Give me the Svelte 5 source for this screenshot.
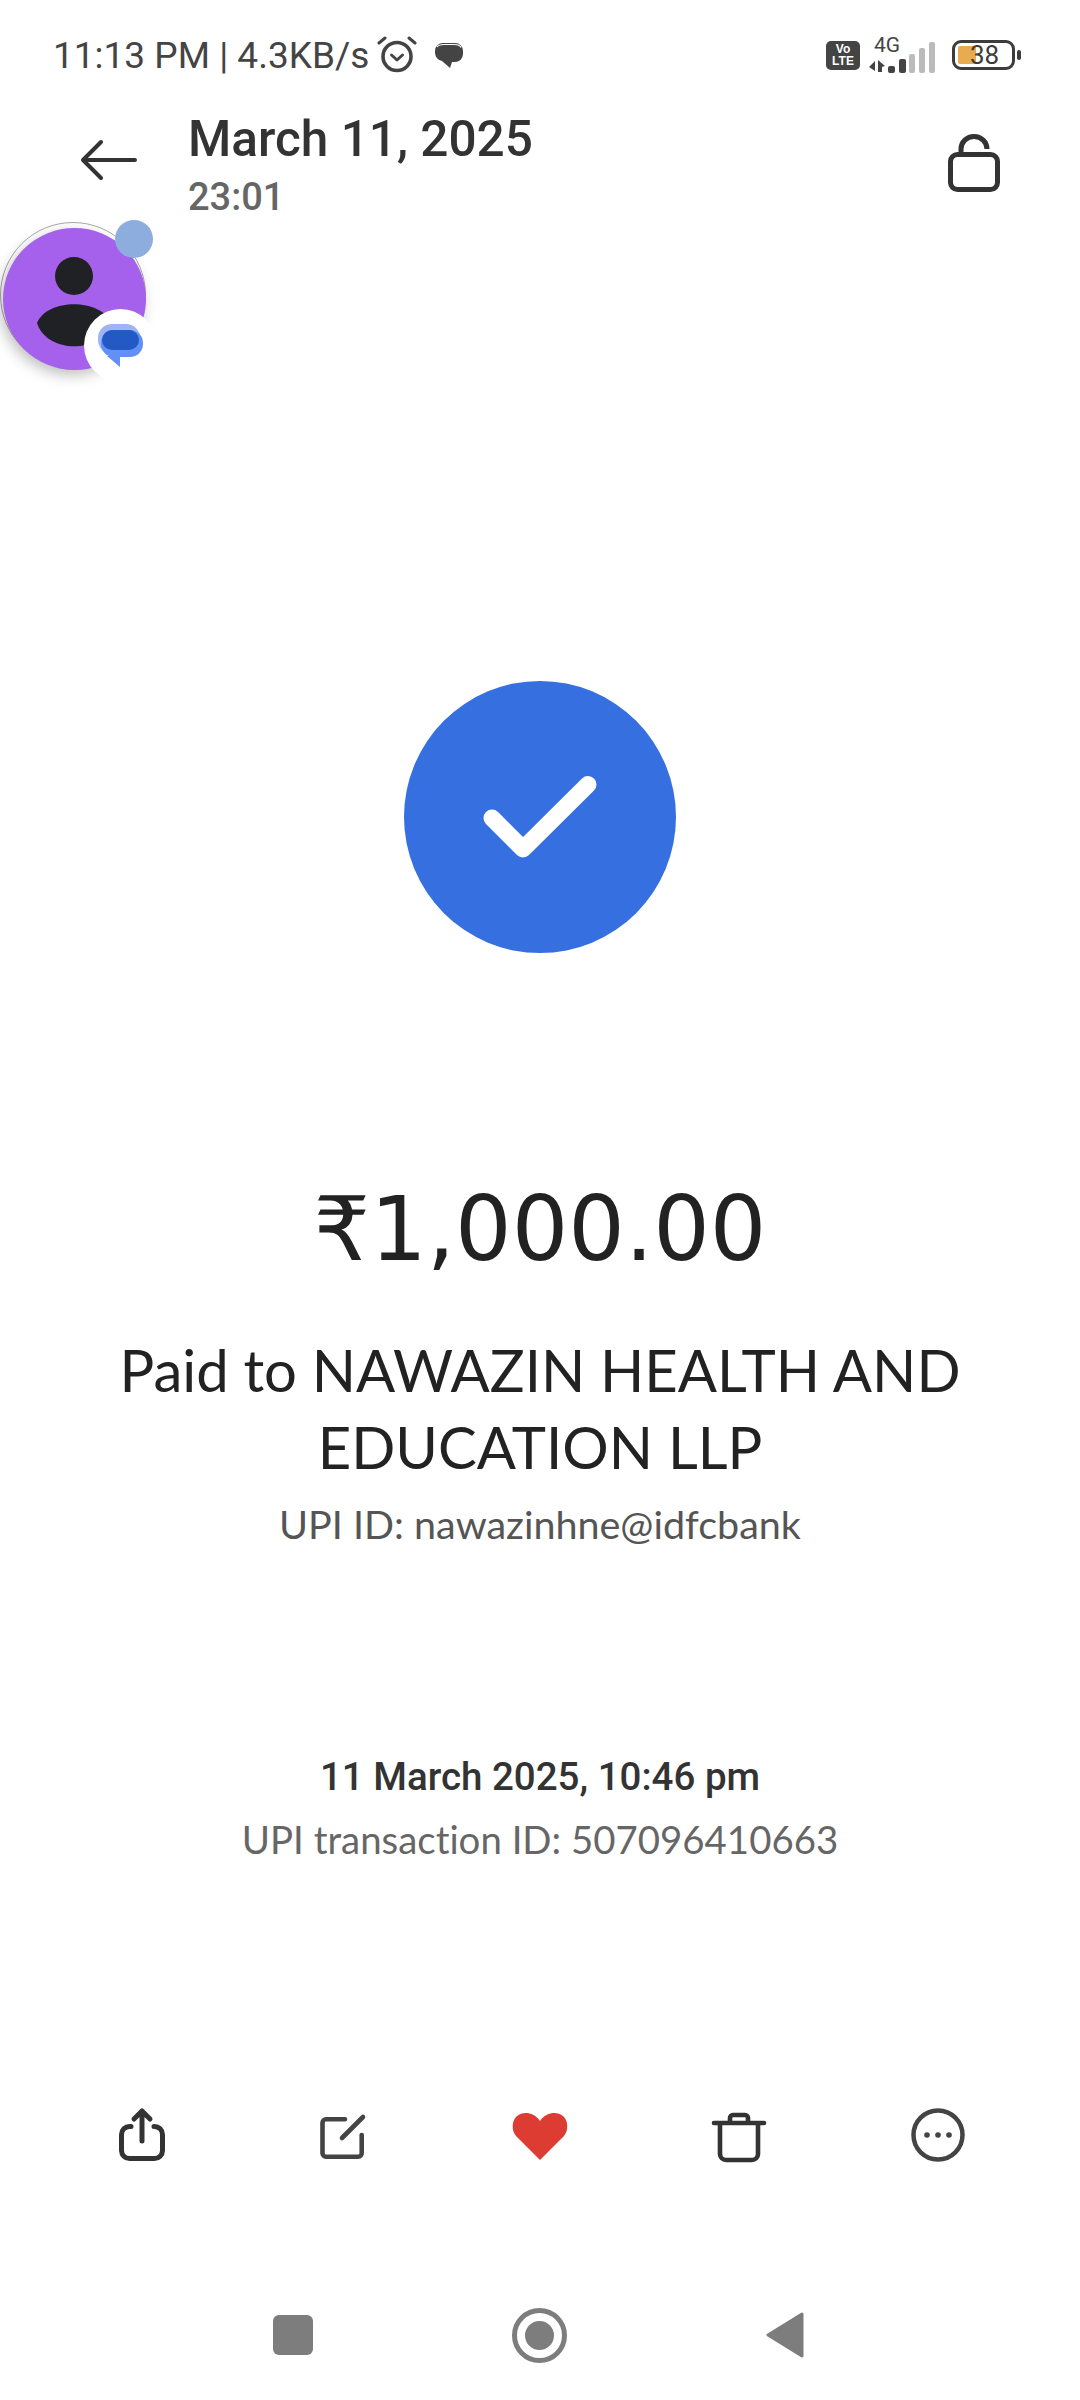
<script>
  const tools = ['share', 'edit', 'heart', 'trash', 'more'];
</script>

<div class="screen">
  <div class="status">
    <div class="status-left">
      <span class="status-text">11:13 PM | 4.3KB/s</span>
      <svg class="alarm" viewBox="0 0 40 40" width="40" height="40">
        <circle cx="20" cy="21.500" r="14" fill="none" stroke="#444" stroke-width="3.600" />
        <path d="M14.500 20l5.500 5 5.500-5" fill="none" stroke="#444" stroke-width="3" stroke-linecap="round" stroke-linejoin="round" />
        <path d="M2 8l6-5M38 8l-6-5" fill="none" stroke="#444" stroke-width="3" stroke-linecap="round" />
      </svg>
      <svg class="chat" viewBox="0 0 30 28" width="30" height="28">
        <path d="M9 2h12a8 8 0 0 1 8 8v3a8 8 0 0 1-8 8h-3l-2 6-8-7a9 9 0 0 1-7-8v-2a8 8 0 0 1 8-8z" fill="#444" />
        <path d="M3 6C5 3.500 8 3.500 10 3.500h10c3 0 6 .5 7 3" fill="none" stroke="#fff" stroke-width="1.200" />
      </svg>
    </div>
    <div class="status-right">
      <div class="volte"><span>Vo</span><span>LTE</span></div>
      <div class="net">
        <span class="net-label">4G</span>
        <svg viewBox="0 0 68 34" width="68" height="34">
          <path d="M6 22L0 28l6 4zM9 21l7 6-3 1v5H9z" fill="#444" />
          <rect x="19" y="27" width="7" height="7" rx="2" fill="#444" />
          <rect x="30" y="20" width="7" height="14" rx="2" fill="#444" />
          <rect x="40" y="15" width="6" height="19" rx="2" fill="#bbb" />
          <rect x="50" y="9" width="6" height="25" rx="2" fill="#bbb" />
          <rect x="60" y="3" width="6" height="31" rx="2" fill="#bbb" />
        </svg>
      </div>
      <div class="battery">
        <div class="battery-body">
          <div class="battery-fill"></div>
          <span class="battery-num">38</span>
        </div>
        <div class="battery-nub"></div>
      </div>
    </div>
  </div>

  <div class="header">
    <svg class="back" viewBox="0 0 60 44" width="60" height="44">
      <path d="M3 22h52M21 4L3 22l18 18" fill="none" stroke="#333" stroke-width="4" stroke-linecap="round" stroke-linejoin="round" />
    </svg>
    <div class="title">
      <div class="title-date">March 11, 2025</div>
      <div class="title-time">23:01</div>
    </div>
    <svg class="lock" viewBox="0 0 52 58" width="52" height="58">
      <rect x="2.500" y="20.500" width="47" height="35" rx="7" fill="none" stroke="#333" stroke-width="5" />
      <path d="M13 20v-5a13 12.500 0 0 1 26 0" fill="none" stroke="#333" stroke-width="5" />
    </svg>
  </div>

  <div class="bubble">
    <div class="ring"></div>
    <div class="avatar">
      <svg viewBox="0 0 143 142" width="143" height="142">
        <circle cx="71" cy="48" r="19" fill="#202124" />
        <path d="M34 95C44 70 98 70 108 95C98 126 44 126 34 95z" fill="#202124" />
      </svg>
    </div>
    <div class="dot"></div>
    <div class="badge">
      <svg viewBox="0 0 45 43" width="45" height="43">
        <rect x="0" y="0" width="42" height="30" rx="14" fill="#9db5f7" />
        <rect x="3" y="6" width="42" height="27" rx="13" fill="#6290f5" />
        <path d="M9 32l13 11V32z" fill="#6290f5" />
        <rect x="4" y="6" width="37" height="20" rx="10" fill="#2359c4" />
      </svg>
    </div>
  </div>

  <main class="content">
    <div class="check">
      <svg viewBox="0 0 100 80" width="100" height="80">
        <path d="M2 41l31 31L98 7.500" fill="none" stroke="#fff" stroke-width="17" stroke-linecap="round" stroke-linejoin="round" />
      </svg>
    </div>
    <div class="amount">₹1,000.00</div>
    <div class="paid">Paid to NAWAZIN HEALTH AND<br />EDUCATION LLP</div>
    <div class="upi">UPI ID: nawazinhne@idfcbank</div>
    <div class="when">11 March 2025, 10:46 pm</div>
    <div class="txn">UPI transaction ID: 507096410663</div>
  </main>

  <div class="toolbar">
    {#each tools as tool}
      <div class="tool">
        {#if tool === 'share'}
          <svg viewBox="0 0 60 60" width="60" height="60">
            <path d="M19 21.500h-1.500a8 8 0 0 0-8 8v16a8 8 0 0 0 8 8h25a8 8 0 0 0 8-8v-16a8 8 0 0 0-8-8H42" fill="none" stroke="#333" stroke-width="5" stroke-linecap="round" />
            <path d="M30 36V6M22 14l8-8 8 8" fill="none" stroke="#333" stroke-width="5" stroke-linecap="round" stroke-linejoin="round" />
          </svg>
        {:else if tool === 'edit'}
          <svg viewBox="0 0 60 60" width="60" height="60">
            <path d="M34 14.300H15a3.500 3.500 0 0 0-3.500 3.500v30.400a3.500 3.500 0 0 0 3.500 3.500h32.200a3.500 3.500 0 0 0 3.500-3.500V30" fill="none" stroke="#444" stroke-width="4.600" stroke-linecap="round" />
            <path d="M31 33L52 12" fill="none" stroke="#444" stroke-width="4.600" stroke-linecap="round" />
          </svg>
        {:else if tool === 'heart'}
          <svg viewBox="0 0 60 60" width="60" height="60">
            <path d="M30 55L6 31C1 25 2 15 7 11c6-5 17-4 23 5C36 7 47 6 53 11c5 4 6 14 1 20z" fill="#dc3c32" />
          </svg>
        {:else if tool === 'trash'}
          <svg viewBox="0 0 60 60" width="60" height="60">
            <path d="M5 18h50" fill="none" stroke="#333" stroke-width="4.600" stroke-linecap="round" />
            <path d="M11 18v31a6 6 0 0 0 6 6h26a6 6 0 0 0 6-6V18" fill="none" stroke="#333" stroke-width="4.600" />
            <path d="M21 18v-5a3 3 0 0 1 3-3h12a3 3 0 0 1 3 3v5" fill="none" stroke="#333" stroke-width="4.600" />
          </svg>
        {:else}
          <svg viewBox="0 0 60 60" width="60" height="60">
            <circle cx="30" cy="30" r="24.500" fill="none" stroke="#444" stroke-width="4.500" />
            <circle cx="19" cy="30" r="2.800" fill="#444" />
            <circle cx="30" cy="30" r="2.800" fill="#444" />
            <circle cx="41" cy="30" r="2.800" fill="#444" />
          </svg>
        {/if}
      </div>
    {/each}
  </div>

  <div class="nav">
    <div class="nav-square"></div>
    <div class="nav-home"><div class="nav-home-inner"></div></div>
    <svg viewBox="0 0 38 48" width="38" height="48">
      <path d="M36 3L2 24l34 21z" fill="#7d7d7d" stroke="#7d7d7d" stroke-width="3" stroke-linejoin="round" />
    </svg>
  </div>
</div>

<style>
  :global(body) {
    margin: 0;
    background: #fff;
  }

  .screen {
    position: relative;
    width: 1080px;
    height: 2400px;
    background: #fff;
    overflow: hidden;
    display: flex;
    flex-direction: column;
    font-family: Roboto, sans-serif;
  }

  .status {
    display: flex;
    justify-content: space-between;
    align-items: center;
    height: 54px;
    padding: 28px 59px 0 53px;
  }

  .status-left {
    display: flex;
    align-items: center;
  }

  .status-text {
    font-size: 37px;
    color: #444;
    white-space: nowrap;
  }

  .alarm {
    margin-left: 8px;
  }

  .chat {
    margin-left: 17px;
  }

  .status-right {
    display: flex;
    align-items: center;
  }

  .volte {
    width: 34px;
    height: 29px;
    background: #444;
    border-radius: 5px;
    color: #fff;
    font-family: "Liberation Sans", sans-serif;
    font-size: 12px;
    font-weight: 700;
    line-height: 12px;
    display: flex;
    flex-direction: column;
    align-items: center;
    justify-content: center;
  }

  .net {
    position: relative;
    display: flex;
    align-items: flex-end;
    width: 68px;
    height: 36px;
    margin-left: 9px;
  }

  .net-label {
    position: absolute;
    left: 5px;
    top: -3px;
    font-size: 21px;
    line-height: 22px;
    color: #444;
  }

  .battery {
    display: flex;
    align-items: center;
    gap: 2px;
    margin-left: 15px;
  }

  .battery-body {
    position: relative;
    box-sizing: border-box;
    width: 63px;
    height: 30px;
    border: 3.500px solid #3c3c3c;
    border-radius: 9px;
  }

  .battery-fill {
    position: absolute;
    left: 3px;
    top: 2.500px;
    width: 18px;
    height: 18px;
    background: #e8ac50;
    border-radius: 2px;
  }

  .battery-num {
    position: absolute;
    left: 15px;
    top: -3px;
    font-size: 26px;
    line-height: 30px;
    color: #3c3c3c;
  }

  .battery-nub {
    width: 4px;
    height: 10px;
    background: #3c3c3c;
    border-radius: 2px;
  }

  .header {
    display: flex;
    align-items: flex-start;
    height: 120px;
    padding: 28px 80px 0 80px;
  }

  .back {
    margin-top: 28px;
    flex: none;
  }

  .title {
    flex: 1;
    margin-left: 48px;
  }

  .title-date {
    font-size: 49.500px;
    font-weight: 500;
    line-height: 58px;
    color: #333;
  }

  .title-time {
    font-size: 38px;
    font-weight: 500;
    line-height: 44px;
    color: #666;
    margin-top: 7px;
  }

  .lock {
    margin-top: 24px;
  }

  .bubble {
    position: absolute;
    left: 0;
    top: 210px;
    width: 170px;
    height: 180px;
  }

  .ring {
    position: absolute;
    box-sizing: border-box;
    left: 0;
    top: 12px;
    width: 146px;
    height: 146px;
    border: 1px solid #aaa;
    border-radius: 50%;
  }

  .avatar {
    position: absolute;
    left: 3px;
    top: 18px;
    width: 143px;
    height: 142px;
    border-radius: 50%;
    background: #a560ec;
    box-shadow: -3px 5px 14px rgba(0, 0, 0, 0.25);
  }

  .dot {
    position: absolute;
    left: 115px;
    top: 10px;
    width: 38px;
    height: 38px;
    border-radius: 50%;
    background: #8dadde;
  }

  .badge {
    position: absolute;
    left: 84px;
    top: 99px;
    width: 73px;
    height: 73px;
    border-radius: 50%;
    background: #fff;
    display: flex;
    align-items: center;
    justify-content: center;
  }

  .content {
    flex: 1;
    display: flex;
    flex-direction: column;
    align-items: center;
    font-family: Lato, sans-serif;
    font-variant-ligatures: none;
    text-align: center;
  }

  .check {
    width: 272px;
    height: 272px;
    margin-top: 451px;
    border-radius: 50%;
    background: #3670e0;
    display: flex;
    align-items: center;
    justify-content: center;
  }

  .check svg {
    overflow: visible;
  }

  .amount {
    margin-top: 221px;
    font-family: "DejaVu Sans", sans-serif;
    font-size: 89px;
    line-height: 110px;
    color: #222;
  }

  .paid {
    margin-top: 47px;
    font-size: 58px;
    line-height: 77px;
    color: #222;
  }

  .upi {
    margin-top: 14px;
    font-size: 39.500px;
    line-height: 50px;
    color: #555;
  }

  .when {
    margin-top: 205px;
    font-family: Roboto, sans-serif;
    font-size: 38.500px;
    line-height: 46px;
    font-weight: 500;
    color: #333;
  }

  .txn {
    margin-top: 16px;
    font-size: 38.400px;
    line-height: 46px;
    color: #666;
  }

  .toolbar {
    display: flex;
    justify-content: space-between;
    padding: 0 112px;
    margin-bottom: 142px;
  }

  .tool {
    width: 60px;
    height: 60px;
  }

  .nav {
    display: flex;
    justify-content: space-between;
    align-items: center;
    height: 56px;
    padding: 0 276px 0 273px;
    margin-bottom: 37px;
  }

  .nav-square {
    width: 40px;
    height: 40px;
    background: #7d7d7d;
    border-radius: 6px;
  }

  .nav-home {
    box-sizing: border-box;
    width: 55px;
    height: 55px;
    border: 5px solid #7d7d7d;
    border-radius: 50%;
    display: flex;
    align-items: center;
    justify-content: center;
  }

  .nav-home-inner {
    width: 29px;
    height: 29px;
    background: #7d7d7d;
    border-radius: 50%;
  }
</style>
